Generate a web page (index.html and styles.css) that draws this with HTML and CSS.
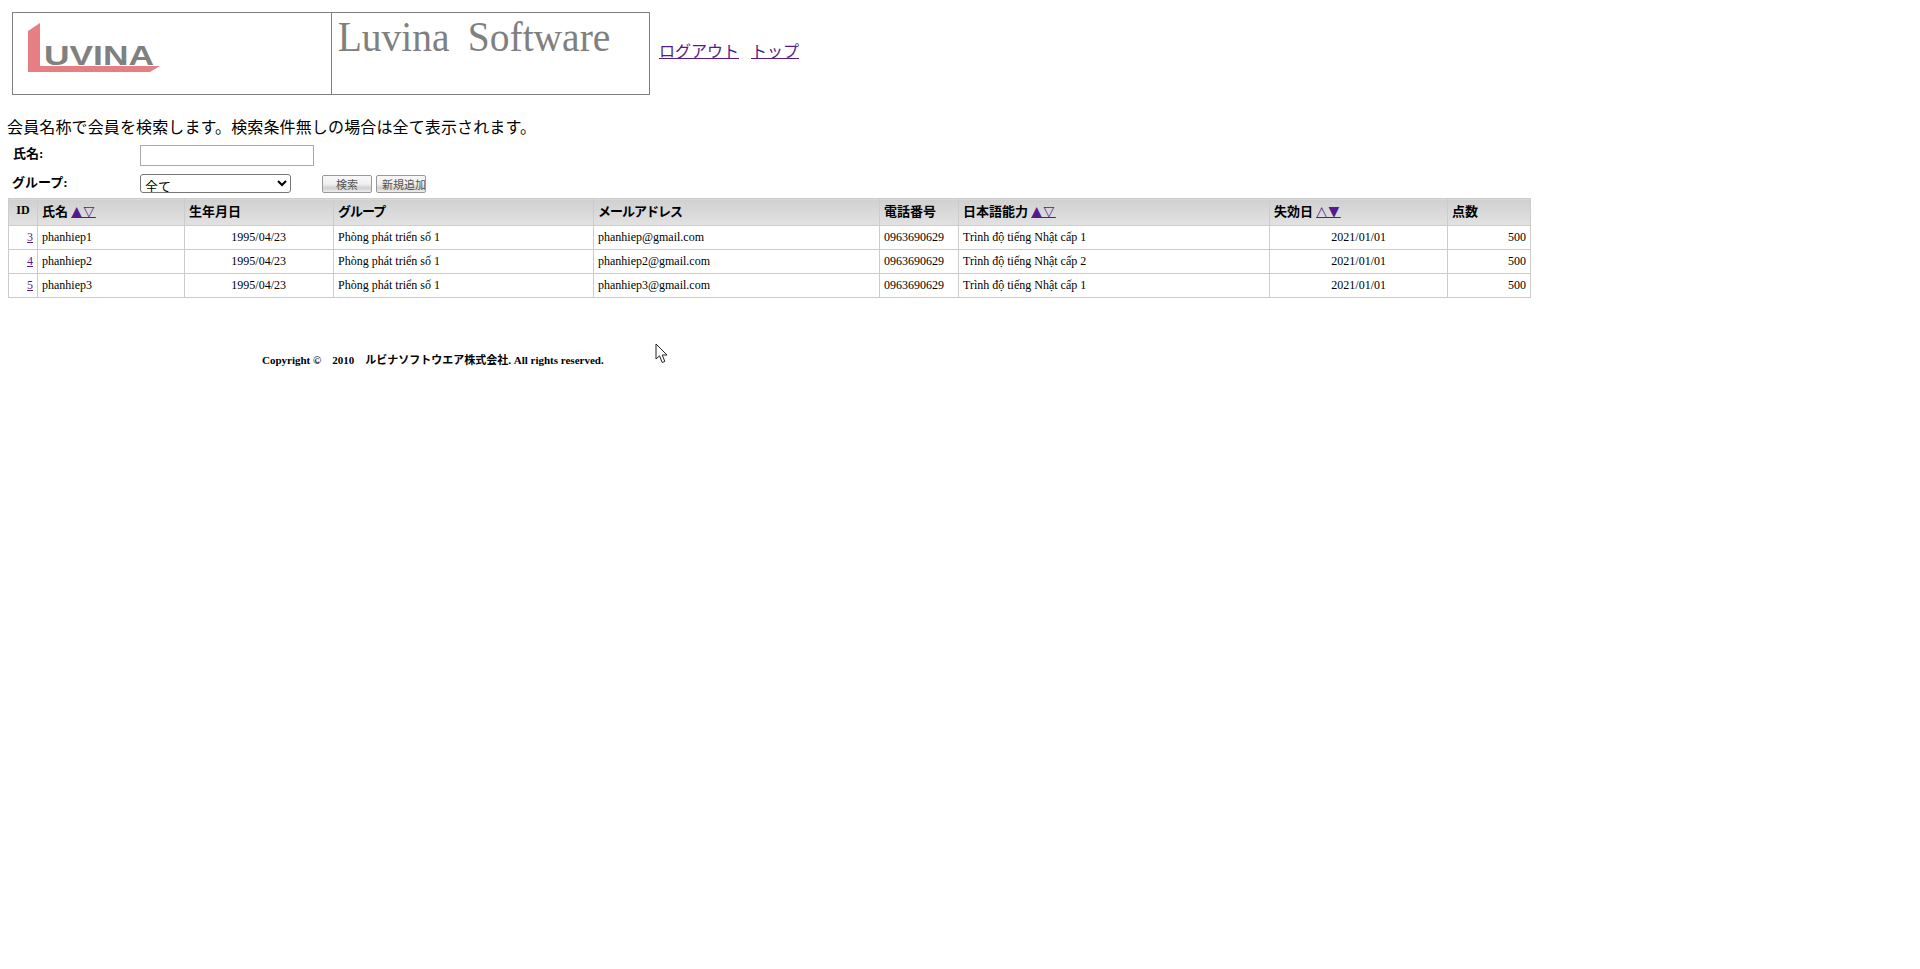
FILE: index.html
```html
<!DOCTYPE html>
<html lang="ja">
<head>
    <meta charset="utf-8">
    <title>会員一覧</title>
    <link rel="stylesheet" href="styles.css">
</head>
<body>
    <!-- header -->
    <div class="top">
        <div class="banner">
            <div class="banner-logo">
                <svg width="134" height="50" viewBox="0 0 134 50">
                    <polygon points="0,8 12,0 12,43 132,43 122,49 0,49" fill="#e67f84"/>
                    <text x="16" y="42" class="logo-text" textLength="110" lengthAdjust="spacingAndGlyphs">UVINA</text>
                </svg>
            </div>
            <div class="banner-title">Luvina Software</div>
        </div>
        <div class="top-links">
            <a href="#">ログアウト</a>
            <a href="#">トップ</a>
        </div>
    </div>

    <p class="guide">会員名称で会員を検索します。検索条件無しの場合は全て表示されます。</p>

    <!-- search -->
    <form class="search">
        <div class="search-row row-name">
            <label class="label-name">氏名:</label>
            <input type="text" class="txt-name">
        </div>
        <div class="search-row row-group">
            <label class="label-group">グループ:</label>
            <select class="sel-group"><option>全て</option></select>
            <button type="button" class="btn btn-search">検索</button>
            <button type="button" class="btn btn-add">新規追加</button>
        </div>
    </form>

    <!-- list -->
    <table class="list">
        <colgroup>
            <col class="c-id"><col class="c-name"><col class="c-birth"><col class="c-group"><col class="c-mail">
            <col class="c-tel"><col class="c-level"><col class="c-date"><col class="c-score">
        </colgroup>
        <tr>
            <th class="center">ID</th>
            <th>氏名 <a href="#">▲▽</a></th>
            <th>生年月日</th>
            <th class="kana">グループ</th>
            <th class="kana">メールアドレス</th>
            <th>電話番号</th>
            <th>日本語能力 <a href="#">▲▽</a></th>
            <th>失効日 <a href="#">△▼</a></th>
            <th>点数</th>
        </tr>
        <tr>
            <td class="right"><a href="#">3</a></td>
            <td>phanhiep1</td>
            <td class="birth">1995/04/23</td>
            <td>Phòng phát triển số 1</td>
            <td>phanhiep@gmail.com</td>
            <td>0963690629</td>
            <td>Trình độ tiếng Nhật cấp 1</td>
            <td class="expire">2021/01/01</td>
            <td class="right">500</td>
        </tr>
        <tr>
            <td class="right"><a href="#">4</a></td>
            <td>phanhiep2</td>
            <td class="birth">1995/04/23</td>
            <td>Phòng phát triển số 1</td>
            <td>phanhiep2@gmail.com</td>
            <td>0963690629</td>
            <td>Trình độ tiếng Nhật cấp 2</td>
            <td class="expire">2021/01/01</td>
            <td class="right">500</td>
        </tr>
        <tr>
            <td class="right"><a href="#">5</a></td>
            <td>phanhiep3</td>
            <td class="birth">1995/04/23</td>
            <td>Phòng phát triển số 1</td>
            <td>phanhiep3@gmail.com</td>
            <td>0963690629</td>
            <td>Trình độ tiếng Nhật cấp 1</td>
            <td class="expire">2021/01/01</td>
            <td class="right">500</td>
        </tr>
    </table>

    <div class="footer">Copyright ©&nbsp;&nbsp;&nbsp; 2010 &nbsp;&nbsp;&nbsp;ルビナソフトウエア株式会社. All rights reserved.</div>

    <!-- mouse pointer in the shot -->
    <svg class="pointer" width="14" height="21" viewBox="0 0 14 21">
        <path d="M1 1 L1 16 L4.5 12.8 L7.2 19.5 L9.8 18.4 L7.2 12 L12 12 Z" fill="#fff" stroke="#222" stroke-width="1"/>
    </svg>
</body>
</html>
```

FILE: styles.css
```css
body {
    margin: 0;
    font-family: "Liberation Serif", "Noto Sans CJK JP", serif;
    font-size: 12px;
    color: #000;
    background-color: #FFFFFF;
}

a {
    color: #551A8B;
}

.top {
    display: flex;
    align-items: center;
    padding: 12px 0 0 12px;
}

.banner {
    display: flex;
    width: 638px;
    height: 83px;
    box-sizing: border-box;
    border: 1px solid #808080;
}

.banner-logo {
    width: 319px;
    padding: 10px 0 0 15px;
    box-sizing: border-box;
    border-right: 1px solid #808080;
}

.logo-text {
    font-family: "Liberation Sans", sans-serif;
    font-weight: bold;
    font-size: 28px;
    fill: #808080;
}

.banner-title {
    padding: 2px 0 0 6px;
    font-size: 42px;
    line-height: 44px;
    word-spacing: 9px;
    color: #808080;
    white-space: nowrap;
    transform: scaleX(0.94);
    transform-origin: left top;
}

.top-links {
    display: flex;
    gap: 12px;
    margin-left: 9px;
    padding-bottom: 8px;
    font-size: 16px;
    font-family: "Noto Sans CJK JP", sans-serif;
}

.guide {
    margin: 20px 0 0 7px;
    font-family: "Noto Sans CJK JP", sans-serif;
    font-size: 16px;
    line-height: 22px;
    letter-spacing: 0.13px;
}

.search {
    margin: 0;
}

.search-row {
    display: flex;
    align-items: center;
    font-weight: bold;
    font-size: 13px;
}

.row-name {
    height: 21px;
    margin-top: 8px;
}

.row-group {
    height: 19px;
    margin-top: 8px;
}

.label-name {
    width: 127px;
    margin-bottom: 7px;
    padding-left: 13px;
}

.label-group {
    width: 128px;
    margin-bottom: 5px;
    padding-left: 12px;
}

.txt-name {
    width: 174px;
    height: 21px;
    box-sizing: border-box;
    border: 1px solid #A9A9A9;
    padding: 0;
}

.sel-group {
    width: 151px;
    height: 19px;
    box-sizing: border-box;
    border: 1px solid #767676;
    border-radius: 3px;
    background-color: #FFFFFF;
    font-family: "Noto Sans CJK JP", sans-serif;
    font-size: 13px;
}

.btn {
    width: 50px;
    height: 18px;
    box-sizing: border-box;
    padding: 0;
    border: 1px solid #999999;
    border-radius: 2px;
    background: linear-gradient(#F8F8F8 0%, #F0F0F0 50%, #CFCFCF 75%, #EEEEEE 100%);
    font-family: "Noto Sans CJK JP", sans-serif;
    font-size: 11px;
    color: #555555;
    overflow: hidden;
    white-space: nowrap;
}

.btn-search {
    margin-left: 31px;
}

.btn-add {
    margin-left: 4px;
    padding-left: 5px;
    text-align: left;
}

.list {
    table-layout: fixed;
    width: 1522px;
    margin: 5px 0 0 8px;
    border-collapse: collapse;
}

.c-id { width: 29px; }
.c-name { width: 147px; }
.c-birth { width: 149px; }
.c-group { width: 260px; }
.c-mail { width: 286px; }
.c-tel { width: 79px; }
.c-level { width: 311px; }
.c-date { width: 178px; }
.c-score { width: 83px; }

.list th {
    height: 27px;
    padding: 0 4px 3px;
    box-sizing: border-box;
    border: 1px solid #CCCCCC;
    background: linear-gradient(#D0D0D0, #E2E2E2);
    font-size: 13px;
    text-align: left;
    white-space: nowrap;
}

.list th.center {
    padding: 0 0 3px;
    text-align: center;
    font-size: 12px;
}

.list th.kana {
    letter-spacing: -1px;
}

.list th a {
    font-family: "DejaVu Sans", sans-serif;
    font-size: 14px;
    letter-spacing: 1.5px;
}

.list td {
    height: 24px;
    padding: 0 4px 1px;
    box-sizing: border-box;
    border: 1px solid #CCCCCC;
    white-space: nowrap;
}

.list td.right {
    text-align: right;
}

.list td.birth {
    padding-right: 47px;
    text-align: right;
}

.list td.expire {
    padding-right: 61px;
    text-align: right;
}

.footer {
    margin: 55px 0 0 262px;
    font-size: 11px;
    font-weight: bold;
    line-height: 15px;
}

.pointer {
    position: absolute;
    left: 655px;
    top: 343px;
}
```
